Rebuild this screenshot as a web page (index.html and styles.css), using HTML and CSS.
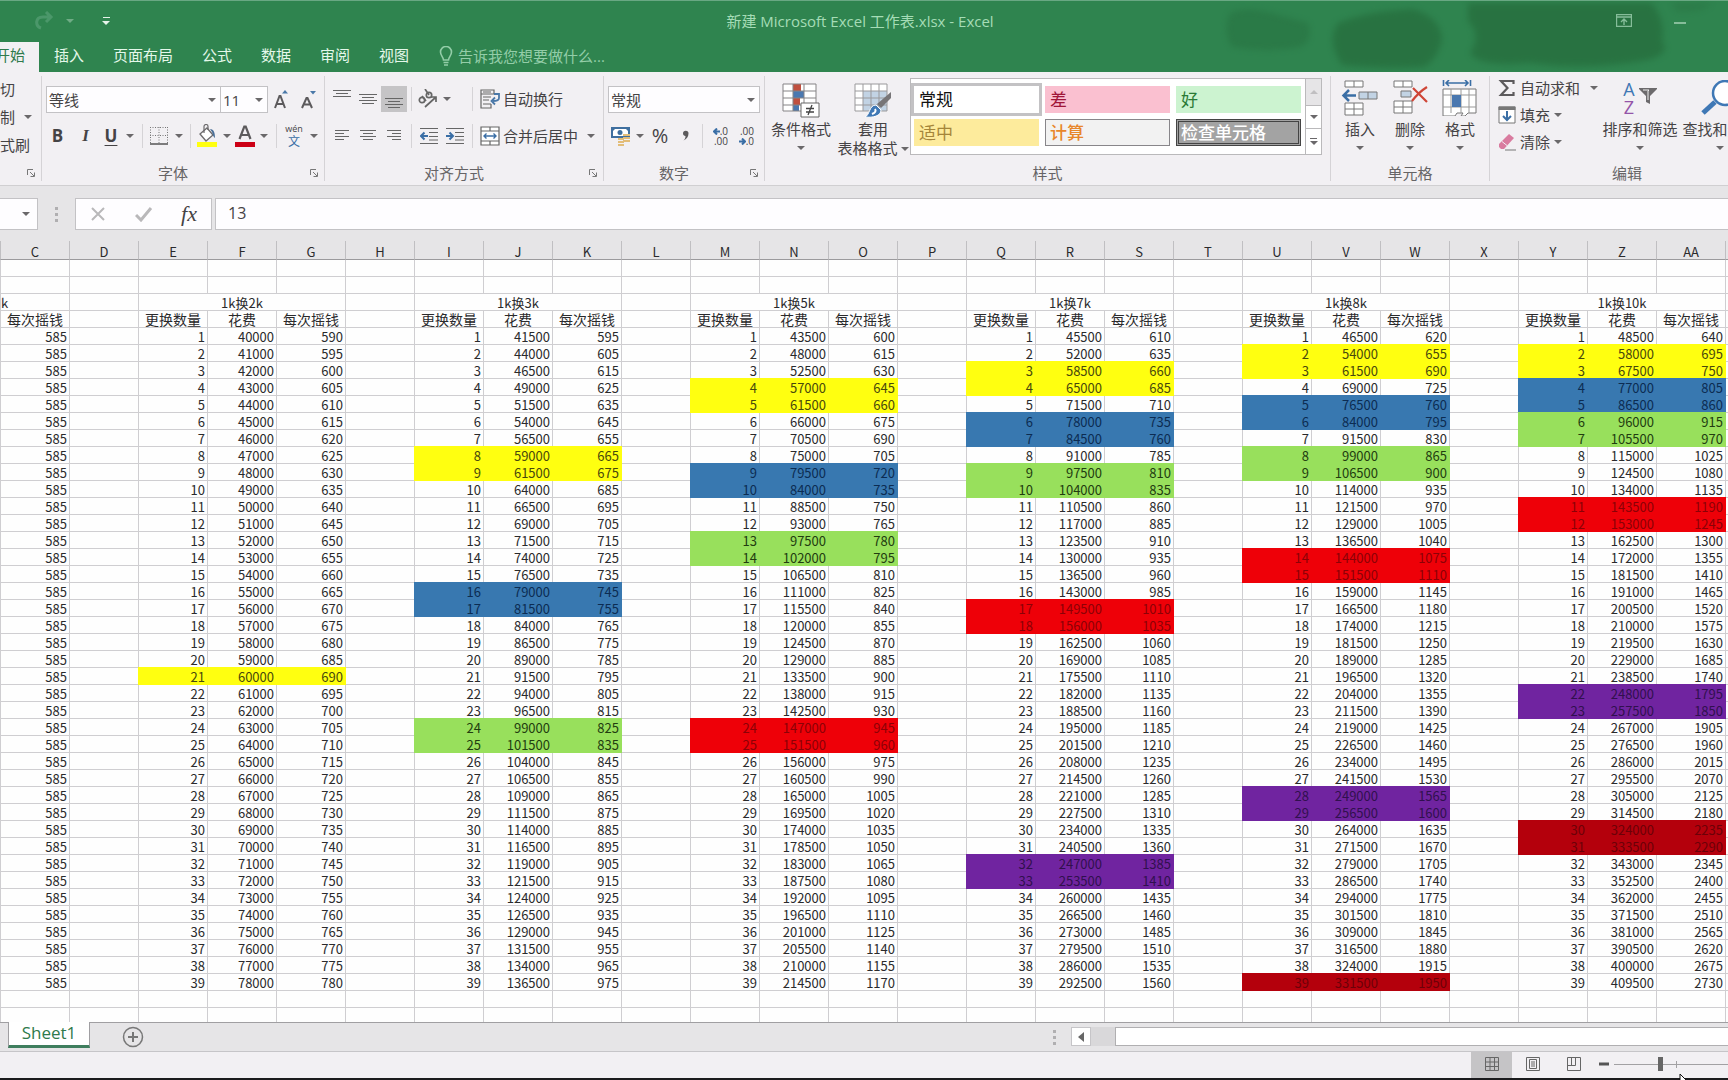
FILE: index.html
```html
<!DOCTYPE html>
<html lang="zh-CN">
<head>
<meta charset="utf-8">
<title>新建 Microsoft Excel 工作表.xlsx - Excel</title>
<link rel="stylesheet" href="styles.css">
</head>
<body>
<header class="top">
  <svg class="blots" viewBox="0 0 540 72" aria-hidden="true">
    <g fill="#27703f">
      <path opacity=".6" d="M42 12 Q60 4 90 14 L120 22 Q126 40 112 46 Q80 52 44 46 Q34 30 42 12Z"/>
      <path d="M150 22 Q180 10 225 8 Q252 16 254 38 Q250 58 236 66 Q190 68 154 64 Q138 40 150 22Z"/>
      <path d="M280 2 H464 Q478 20 474 40 Q484 52 460 59 Q400 70 340 62 Q290 66 282 52 Q294 34 280 20Z"/>
      <path opacity=".5" d="M484 2 H524 Q516 12 488 10Z"/>
    </g>
  </svg>
  <div class="titlebar">
    <div class="quick">
      <button class="redo" aria-label="恢复">
        <svg width="22" height="20" viewBox="0 0 22 20"><path d="M7 17C1 15 1 6 9 6H17M12 1l5 5-5 5" fill="none" stroke="#5fa57c" stroke-width="3"/></svg>
        <span class="arrow faint"></span>
      </button>
      <button class="more" aria-label="自定义快速访问工具栏"><i></i><span class="arrow"></span></button>
    </div>
    <h1>新建 Microsoft Excel 工作表.xlsx - Excel</h1>
    <div class="window">
      <button aria-label="功能区显示选项"><svg width="16" height="13" viewBox="0 0 16 13"><path d="M.5 .5h15v12H.5zM.5 3h15M8 11V5M5 8l3-3 3 3" fill="none" stroke="#86bd9a" stroke-width="1.4"/></svg></button>
      <button aria-label="最小化"><svg width="12" height="13" viewBox="0 0 12 13"><path d="M0 9h12" stroke="#86bd9a" stroke-width="2"/></svg></button>
    </div>
  </div>
  <nav class="tabs">
    <a class="active" href="#home">开始</a><a href="#insert">插入</a><a href="#layout">页面布局</a><a href="#formula">公式</a><a href="#data">数据</a><a href="#review">审阅</a><a href="#view">视图</a>
    <button class="tell"><svg width="14" height="20" viewBox="0 0 14 20"><path d="M4.5 14c0-3-3-4-3-8a5.500 5.500 0 0 1 11 0c0 4-3 5-3 8zM4.500 16.500h5M5 19h4" fill="none" stroke="#93cda8" stroke-width="1.600"/></svg>告诉我您想要做什么...</button>
  </nav>
</header>

<section class="ribbon">
  <div class="group clip">
    <div class="stack">
      <button>切</button>
      <button>制<span class="arrow"></span></button>
      <button>式刷</button>
    </div>
    <footer><span></span><button class="launch" aria-label="剪贴板"><svg width="8" height="8"><use href="#launch"/></svg></button></footer>
  </div>

  <div class="group font">
    <div class="row combos">
      <label class="combo"><select aria-label="字体"><option>等线</option></select></label>
      <label class="combo size"><select aria-label="字号"><option>11</option></select></label>
      <button aria-label="增大字号"><svg width="18" height="20" viewBox="0 0 18 20"><path d="M2 18L6.500 6h1L12 18M4 14h6" fill="none" stroke="#5c5a5c" stroke-width="2"/><path d="M9 3.500L12 0l3 3.500z" fill="#4a78a8"/></svg></button>
      <button aria-label="减小字号"><svg width="18" height="20" viewBox="0 0 18 20"><path d="M2 18L6.500 8h1L12 18M4 14.500h6" fill="none" stroke="#5c5a5c" stroke-width="2"/><path d="M10 1l3 3.500L16 1z" fill="#4a78a8"/></svg></button>
    </div>
    <div class="row tools">
      <button class="b">B</button><button class="i">I</button><button class="u">U</button><span class="arrow"></span><span class="sep"></span>
      <button aria-label="边框"><svg width="18" height="18" viewBox="0 0 18 18"><path d="M.5 0v17M17.500 0v17M9 0v17M0 .5h18M0 8.500h18" fill="none" stroke="#777" stroke-dasharray="1 1.500"/><path d="M0 17h18" stroke="#555" stroke-width="1.500"/></svg></button><span class="arrow"></span><span class="sep"></span>
      <button aria-label="填充颜色"><svg width="20" height="24" viewBox="0 0 20 24"><path d="M3 10l7-6 6 7-7 6z" fill="#fff" stroke="#6c6a6c" stroke-width="1.300"/><path d="M7 9V2.500a2 2 0 0 1 4 0V6" fill="none" stroke="#6c6a6c" stroke-width="1.200"/><path d="M13 5c4 0 5 4 5 9-2-1-2-4-3-6z" fill="#4a6f98"/><path d="M0 18h20v5H0z" fill="#ffff10"/></svg></button><span class="arrow"></span>
      <button aria-label="字体颜色"><svg width="20" height="24" viewBox="0 0 20 24"><path d="M4.500 15L9.300 2.500h1.400L15.500 15M6.500 11h7" fill="none" stroke="#5c5a5c" stroke-width="2.200"/><path d="M0 18h20v5H0z" fill="#cc0015"/></svg></button><span class="arrow"></span><span class="sep"></span>
      <button class="wen"><small>wén</small><b>文</b></button><span class="arrow"></span>
    </div>
    <footer><span>字体</span><button class="launch" aria-label="字体设置"><svg width="8" height="8"><use href="#launch"/></svg></button></footer>
  </div>

  <div class="group align">
    <div class="row one">
      <button aria-label="顶端对齐"><svg width="18" height="20"><path d="M0 1.500h18M3 4.500h12M0 7.500h18" stroke="#666"/></svg></button>
      <button aria-label="垂直居中"><svg width="18" height="20"><path d="M0 5.500h18M3 8.500h12M0 11.500h18M3 14.500h12" stroke="#666"/></svg></button>
      <button class="on" aria-label="底端对齐"><svg width="18" height="20"><path d="M0 9.500h18M3 12.500h12M0 15.500h18M3 18.500h12" stroke="#666"/></svg></button>
      <span class="sep"></span>
      <button aria-label="方向"><svg width="22" height="20" viewBox="0 0 22 20"><g fill="none" stroke="#666" stroke-width="1.700"><circle cx="5" cy="11" r="2.700"/><path d="M5 7l4 5"/><path d="M8 0l4 6"/><circle cx="12" cy="6" r="2.700"/><path d="M8 18L19 8M14 8h5v5"/></g></svg></button><span class="arrow"></span><span></span><span class="sep"></span>
      <button class="txt"><svg width="20" height="20" viewBox="0 0 20 20"><path d="M1 1h13v4H1zM1 5v14h10v-4M3 8h8M3 11h6M3 15h8M3 3h8" fill="none" stroke="#666" stroke-width="1.200"/><path d="M14 5h5v4q0 3-6 3M15 8.500l-3.500 3.500L15 15.500" fill="none" stroke="#4a78a8" stroke-width="1.800"/></svg>自动换行</button>
    </div>
    <div class="row two">
      <button aria-label="左对齐"><svg width="16" height="14"><path d="M1 1.500h14M1 4.500h9M1 7.500h14M1 10.500h9" stroke="#666"/></svg></button>
      <button aria-label="居中"><svg width="16" height="14"><path d="M0 1.500h16M3 4.500h10M0 7.500h16M3 10.500h10" stroke="#666"/></svg></button>
      <button aria-label="右对齐"><svg width="16" height="14"><path d="M1 1.500h14M6 4.500h9M1 7.500h14M6 10.500h9" stroke="#666"/></svg></button>
      <span class="sep"></span>
      <button aria-label="减少缩进量"><svg width="18" height="16"><path d="M0 .5h18M9 4.500h9M9 8.500h9M9 12h9M0 15.500h18" stroke="#666"/><path d="M1 8h7M4.500 4.500L1 8l3.500 3.500" fill="none" stroke="#3a6ea5" stroke-width="2"/></svg></button>
      <button aria-label="增加缩进量"><svg width="18" height="16"><path d="M0 .5h18M9 4.500h9M9 8.500h9M9 12h9M0 15.500h18" stroke="#666"/><path d="M0 8h7M3.500 4.500L7 8l-3.500 3.500" fill="none" stroke="#3a6ea5" stroke-width="2"/></svg></button>
      <span class="sep"></span>
      <button class="txt"><svg width="20" height="20" viewBox="0 0 20 20"><path d="M1 1h18v18H1zM1 5h18M1 15h18M10 1v4M10 15v4" fill="#fff" stroke="#666" stroke-width="1.200"/><path d="M4 10h12M6.500 7.500L4 10l2.500 2.500M13.500 7.500L16 10l-2.500 2.500" fill="none" stroke="#3a6ea5" stroke-width="1.400"/></svg>合并后居中</button><span class="arrow"></span>
    </div>
    <footer><span>对齐方式</span><button class="launch" aria-label="对齐设置"><svg width="8" height="8"><use href="#launch"/></svg></button></footer>
  </div>

  <div class="group number">
    <div class="row"><label class="combo"><select aria-label="数字格式"><option>常规</option></select></label></div>
    <div class="row tools">
      <button aria-label="会计数字格式"><svg width="20" height="20" viewBox="0 0 20 20"><path d="M1 2h17v9H1z" fill="#fff" stroke="#3f6f9f" stroke-width="2"/><circle cx="9" cy="6.500" r="2.500" fill="#3f6f9f"/><path d="M1 2h4L1 6zM18 2h-4l4 4z" fill="#3f6f9f"/><path d="M12 9h7M12 12h7M12 15h7M7 13h6M7 16h6M7 19h6" stroke="#e3bd78" stroke-width="2"/></svg></button><span class="arrow"></span>
      <button class="pct">%</button>
      <button aria-label="千位分隔样式"><svg width="8" height="12"><path d="M1 3.500a2.500 2.500 0 0 1 5.500 0C6.500 7 4.500 9 1.500 10.500 3 9 3.500 8 3.500 6 2 6 1 5 1 3.500z" fill="#5c5a5c"/></svg></button>
      <span class="sep"></span>
      <button class="dec"><span><svg width="7" height="7"><use href="#left"/></svg>.0</span><span>.00</span></button>
      <button class="dec"><span>.00</span><span><svg width="7" height="7"><use href="#right"/></svg>.0</span></button>
    </div>
    <footer><span>数字</span><button class="launch" aria-label="数字设置"><svg width="8" height="8"><use href="#launch"/></svg></button></footer>
  </div>

  <div class="group styles">
    <div class="bigs">
      <button class="big"><svg width="38" height="36" viewBox="0 0 38 36"><path d="M1 1h33v27H1z" fill="#fff"/><path d="M11 1h8v7h-8z" fill="#c0503f"/><path d="M11 8h11v7H11z" fill="#4a78b0"/><path d="M11 15h7v7h-7z" fill="#c0503f"/><path d="M11 22h6v6h-6z" fill="#4a78b0"/><path d="M1 1h33v27H1zM11 1v27M22 1v27M1 8h33M1 15h33M1 22h33" fill="none" stroke="#858385"/><path d="M19 20h18v14H19z" fill="#fff" stroke="#666"/><path d="M24 25.500h8M24 29h8M30 22l-4 10" stroke="#444" stroke-width="1.300"/></svg><span>条件格式</span><span class="arrow"></span></button>
      <button class="big"><svg width="38" height="36" viewBox="0 0 38 36"><path d="M1 1h32v27H1z" fill="#fff"/><path d="M9 8h24v20H9z" fill="#c2d3e4"/><path d="M1 1h32v27H1zM9 1v27M17 1v27M25 1v27M1 8h32M1 15h32M1 22h32" fill="none" stroke="#9a999b"/><path d="M37 9v6l-10 10-4-4z" fill="#777577"/><path d="M22 22l5 5c0 6-8 8-16 7 5-2 4-12 11-12z" fill="#3f78b5" stroke="#fff"/><path d="M21 26q2 3-3 5" fill="none" stroke="#fff" stroke-width="2"/></svg><span>套用</span><span class="line">表格格式<i class="arrow"></i></span></button>
    </div>
    <div class="gallery">
      <div class="swatches">
        <button class="normal">常规</button><button class="bad">差</button><button class="good">好</button>
        <button class="neutral">适中</button><button class="calc">计算</button><button class="check">检查单元格</button>
      </div>
      <div class="scroll"><button class="off" aria-label="上"><span class="arrow up"></span></button><button aria-label="下"><span class="arrow"></span></button><button class="all" aria-label="更多"><i></i><span class="arrow"></span></button></div>
    </div>
    <footer><span>样式</span></footer>
  </div>

  <div class="group cells">
    <div class="bigs">
      <button class="big"><svg width="38" height="36" viewBox="0 0 38 36"><path d="M4 1h18v6H4zM13 1v6M4 23h18v12H4zM13 23v12M4 29h18" fill="#fff" stroke="#777"/><path d="M18 12h18v7H18zM27 12v7" fill="#c2d3e4" stroke="#777"/><path d="M3 15.500h12M8 10l-5.500 5.500L8 21" fill="none" stroke="#3a6ea5" stroke-width="2.500"/></svg><span>插入</span><span class="arrow"></span></button>
      <button class="big"><svg width="38" height="36" viewBox="0 0 38 36"><path d="M3 1h18v6H3zM12 1v6M3 21h18v12H3zM12 21v12M3 27h18" fill="#fff" stroke="#777"/><path d="M10 11h10v6H10z" fill="#c2d3e4" stroke="#777"/><path d="M22 8q6 6 14 14M36 7q-8 5-15 14" fill="none" stroke="#cf4536" stroke-width="2.200"/></svg><span>删除</span><span class="arrow"></span></button>
      <button class="big"><svg width="38" height="36" viewBox="0 0 38 36"><path d="M2 9h33v24H27l-3 3H20l2-3h-6l-2 3H2z" fill="#fff" stroke="#777"/><path d="M10 9v24M20 9v24M28 9v24M2 15h33M2 27h33" stroke="#999"/><path d="M11 15h9v12h-9z" fill="#4a78b0"/><path d="M2.500 0v6M29.500 0v6M5 3h22M8 0L5 3l3 3M24 0l3 3-3 3" fill="none" stroke="#3a6ea5" stroke-width="1.600"/></svg><span>格式</span><span class="arrow"></span></button>
    </div>
    <footer><span>单元格</span></footer>
  </div>

  <div class="group edit">
    <div class="stack">
      <button><svg width="18" height="18" viewBox="0 0 18 18"><path d="M15.500 5V2H3l6.500 7L3 16h12.500v-3" fill="none" stroke="#5c5a5c" stroke-width="2.200"/></svg>自动求和<span class="arrow far"></span></button>
      <button><svg width="18" height="18" viewBox="0 0 18 18"><path d="M1 1h16v16H1z" fill="#fff" stroke="#777"/><path d="M.5 .5h17V4H.5z" fill="#777"/><path d="M9 5v9M5 10l4 4 4-4" fill="none" stroke="#3a6ea5" stroke-width="2"/></svg>填充<span class="arrow"></span></button>
      <button><svg width="18" height="18" viewBox="0 0 18 18"><path d="M1 11L11 1l5 4L6 16H3L1 14z" fill="#d97b9f"/><path d="M4 8.500l5 4" stroke="#f2eff2"/><path d="M7 17h11" stroke="#777"/></svg>清除<span class="arrow"></span></button>
    </div>
    <div class="bigs">
      <button class="big"><span class="az"><span><b>A</b><b>Z</b></span><svg width="18" height="20" viewBox="0 0 18 20"><path d="M0 2h18v1L11 10v8l-4-2v-6L0 3z" fill="#6c6a6c"/><path d="M4 4h6l-1 1v9" fill="none" stroke="#eee"/></svg></span><span>排序和筛选</span><span class="arrow"></span></button>
      <button class="big"><svg width="38" height="36" viewBox="0 0 38 36"><circle cx="24" cy="13" r="12" fill="#fff" stroke="#3f78b5" stroke-width="2.500"/><path d="M14 22L2 33" stroke="#3f78b5" stroke-width="5"/></svg><span>查找和选择</span><span class="arrow"></span></button>
    </div>
    <footer><span>编辑</span></footer>
  </div>
</section>

<section class="formula">
  <button class="namebox" aria-label="名称框"><span class="arrow"></span></button>
  <span class="dots"><i></i><i></i><i></i></span>
  <div class="fxbox">
    <button aria-label="取消"><svg width="16" height="16"><path d="M2 2l12 12M14 2L2 14" stroke="#b9b8ba" stroke-width="2"/></svg></button>
    <button aria-label="输入"><svg width="18" height="16"><path d="M1 9l5 5L16 2" fill="none" stroke="#b9b8ba" stroke-width="3"/></svg></button>
    <button class="fx">fx</button>
  </div>
  <input class="value" aria-label="编辑栏" value="13">
</section>

<main class="sheet"><table><colgroup id="cols"></colgroup><thead id="head"></thead><tbody id="grid"></tbody></table></main>

<section class="sheetbar">
  <button class="sheettab">Sheet1</button>
  <button class="add" aria-label="新工作表"><svg width="22" height="22"><circle cx="11" cy="11" r="9.500" fill="none" stroke="#777" stroke-width="1.500"/><path d="M6 11h10M11 6v10" stroke="#777" stroke-width="2"/></svg></button>
  <span class="dots"><i></i><i></i><i></i></span>
  <div class="hscroll"><button aria-label="向左"><svg width="6" height="10"><path d="M6 0v10L0 5z" fill="#666"/></svg></button><span class="thumb"></span></div>
</section>

<footer class="status">
  <button class="on" aria-label="普通"><svg width="14" height="14"><path d="M.5.5h13v13H.5zM5 0v14M9.500 0v14M0 5h14M0 9.500h14" fill="none" stroke="#666"/></svg></button>
  <button aria-label="页面布局"><svg width="14" height="14"><path d="M.5.5h13v13H.5zM3.500 2.500h7v9h-7zM5 5h4M5 7h4M5 9h4" fill="none" stroke="#666"/></svg></button>
  <button aria-label="分页预览"><svg width="14" height="14"><path d="M.5.5h13v13H.5zM.5 8.500h8v-8M4.500 0v8" fill="none" stroke="#666"/></svg></button>
  <button class="minus" aria-label="缩小"><svg width="10" height="4"><path d="M0 2h10" stroke="#555" stroke-width="3"/></svg></button>
  <div class="zoom"><input type="range" min="0" max="100" value="37" aria-label="缩放"><i></i></div>
</footer>
<svg class="pointer" width="12" height="18" viewBox="0 0 12 18" aria-hidden="true"><path d="M1 0v16l4-4 3 6 2-1-3-6h5z" fill="#fff" stroke="#111"/></svg>

<svg class="defs" aria-hidden="true">
  <symbol id="launch" viewBox="0 0 8 8"><path d="M.5 6V.5H6M3 3l4 4M7.500 3.500v4h-4" fill="none" stroke="#777"/></symbol>
  <symbol id="left" viewBox="0 0 7 7"><path d="M7 3.500H1M4 .5l-3 3 3 3" fill="none" stroke="#3a6ea5" stroke-width="2"/></symbol>
  <symbol id="right" viewBox="0 0 7 7"><path d="M0 3.500h6M3 .5l3 3-3 3" fill="none" stroke="#3a6ea5" stroke-width="2"/></symbol>
</svg>
<script src="script.js"></script>
</body>
</html>
```
FILE: styles.css
```css
* { box-sizing: border-box; }
body {
  margin: 0; height: 100vh; min-width: 0; overflow: hidden;
  display: flex; flex-direction: column;
  font: 15px/20px "Open Sans", "Noto Sans CJK SC", sans-serif;
  color: #454345; background: #e6e5e7;
  border-bottom: 2px solid #1b1b1d;
}
button, select, input { font: inherit; color: inherit; border: 0; padding: 0; margin: 0; background: none; border-radius: 0; }
button { display: flex; align-items: center; justify-content: center; white-space: nowrap; }
svg { display: block; flex: none; }
.defs { display: none; }
.arrow { width: 0; height: 0; border: 4px solid transparent; border-top-color: #6a686a; border-bottom: 0; justify-self: center; flex: none; }
.arrow.up { border-top: 0; border-bottom: 4px solid #c0bfc1; }

/* Title and tabs */
.top { position: relative; flex: none; background: #2f844f; border-top: 1px solid #69a883; overflow: hidden; }
.blots { position: absolute; right: 0; top: 0; width: 540px; height: 72px; filter: blur(3px); opacity: .85; }
.titlebar, .tabs { position: relative; display: flex; align-items: center; }
.titlebar { height: 41px; padding-bottom: 2px; }
.quick, .window { flex: 1; display: flex; align-items: center; }
.quick { gap: 28px; padding-left: 34px; }
.redo { gap: 10px; opacity: .6; }
.more { flex-direction: column; gap: 3px; }
.more i { width: 7px; height: 1px; background: #e6f3ea; }
.more .arrow { border-top-color: #e6f3ea; }
.faint { border-top-color: #9cc8ab; }
.titlebar h1 { margin: 0; font-size: 15px; font-weight: 400; color: #a5dcb6; }
.window { justify-content: flex-end; gap: 42px; padding-right: 42px; }
.tabs { height: 30px; }
.tabs a { color: #e4f8ea; text-decoration: none; padding: 0 14px 0 15px; line-height: 27px; height: 30px; flex: none; white-space: nowrap; }
.tabs a.active { background: #f2f0f3; color: #2f7a4c; width: 39px; padding: 0 14px 0 0; display: flex; justify-content: flex-end; }
.tell { gap: 5px; margin-left: 16px; padding-bottom: 2px; color: #93cda8; }

/* Ribbon */
.ribbon { display: flex; flex: none; height: 114px; padding: 4px 0; background: #f2f0f3; border-bottom: 1px solid #d0cfd1; overflow: hidden; }
.group { flex: none; display: grid; grid-template-rows: 1fr 16px; border-right: 1px solid #d5d3d6; }
.group footer { grid-column: 1 / -1; display: flex; color: #666466; line-height: 16px; }
.group footer span { flex: 1; text-align: center; }
.launch { width: 20px; }
.clip { width: 42px; }
.font { width: 283px; }
.align { width: 279px; }
.number { width: 161px; }
.styles { width: 566px; grid-template-columns: auto 1fr; }
.cells { width: 159px; }
.edit { width: 274px; grid-template-columns: 107px 1fr; border-right: 0; }
.font, .align, .number { grid-template-rows: 26px 26px 1fr; row-gap: 11px; padding-top: 10px; }
.font footer, .align footer, .number footer { align-self: end; height: 16px; }
.row { display: grid; align-items: center; }
.row button { height: 26px; }
.sep { width: 1px; height: 24px; background: #d5d3d6; justify-self: center; }
.on { background: #c5c4c6; }
.stack { display: flex; flex-direction: column; gap: 7px; align-items: flex-start; }
.stack button { height: 20px; }
.clip .stack { padding-top: 3px; gap: 8px; }
.clip .stack .arrow { margin-left: 9px; }

.combo { position: relative; display: block; height: 27px; background: #fefdff; border: 1px solid #c3c2c5; }
.combo select { appearance: none; width: 100%; height: 25px; padding-left: 2px; }
.combo::after { content: ""; position: absolute; right: 4px; top: 11px; border: 4px solid transparent; border-top-color: #6a686a; border-bottom: 0; }
.size { border-left: 0; }
.combos { grid-template-columns: 175px 47px 28px 26px; padding-left: 4px; }
.font .tools { grid-template-columns: 27px 29px 22px 16px 8px 26px 14px 8px 26px 14px 22px 16px 8px 28px 12px; padding-left: 2px; }
.b, .i, .u { font-size: 17px; font-weight: 700; }
.i { font-family: "Liberation Serif", serif; font-style: italic; }
.u { text-decoration: underline; text-underline-offset: 3px; }
.wen { flex-direction: column; }
.wen small { font-size: 9px; line-height: 12px; }
.wen b { font-size: 12px; line-height: 14px; font-weight: 400; color: #3a6ea5; }
.one { grid-template-columns: 26px 26px 26px 8px 26px 12px 15px 8px 107px; padding-left: 4px; }
.two { grid-template-columns: 26px 26px 26px 8px 27px 26px 8px 107px 16px; padding-left: 4px; }
.txt { gap: 3px; justify-content: flex-start; padding-left: 4px; }
.number .row { padding-left: 4px; }
.number .combo { width: 152px; }
.number .tools { grid-template-columns: 26px 12px 28px 24px 8px 28px 26px; }
.pct { font-size: 20px; }
.dec { flex-direction: column; align-items: flex-end; font-size: 10px; line-height: 10px; padding-right: 6px; }
.dec span { display: flex; align-items: center; }

.bigs { display: flex; }
.big { width: 72px; flex: none; flex-direction: column; justify-content: flex-start; line-height: 19px; padding-top: 7px; }
.big svg { margin-bottom: 1px; }
.big > .arrow { margin-top: 7px; }
.line { display: flex; align-items: center; gap: 3px; }
.gallery { display: grid; grid-template-columns: 1fr 16px; width: 412px; height: 77px; margin: 2px 0 0 1px; background: #fff; border: 1px solid #bab9bb; }
.swatches { display: grid; grid-template-columns: repeat(3, 125px); grid-auto-rows: 27px; gap: 6px; padding: 7px 0 0 3px; }
.swatches button { justify-content: flex-start; padding-left: 5px; font-size: 17px; color: #111; }
.normal { outline: 3px solid #c3c2c4; background: #fff; }
.swatches .bad { background: #fac0d0; color: #a01538; }
.swatches .good { background: #ccf3d0; color: #2a7a35; }
.swatches .neutral { background: #fdeb9c; color: #a5853a; }
.swatches .calc { background: #f2f2f2; color: #e8862a; border: 1px solid #88868a; font-weight: 500; padding-left: 4px; }
.swatches .check { background: #a3a3a3; color: #fff; border: 3px double #444; padding-left: 2px; font-weight: 500; }
.scroll { display: grid; grid-template-rows: 26px 23px 1fr; border-left: 1px solid #bab9bb; }
.scroll button + button { border-top: 1px solid #bab9bb; }
.scroll .off { background: #e6e5e7; }
.all { flex-direction: column; gap: 2px; }
.all i { width: 7px; height: 1px; background: #6a686a; }
.cells .bigs { padding-left: 4px; }
.cells .big { width: 50px; padding-top: 4px; }
.cells .big svg, .edit .big svg { margin-bottom: 4px; }
.edit .stack { padding: 2px 0 0 8px; }
.edit .stack button { gap: 4px; }
.edit .far { margin-left: 6px; }
.edit .big { width: 80px; padding-top: 4px; }
.edit .bigs { padding-left: 3px; }
.az { display: flex; align-items: center; gap: 4px; height: 36px; margin-bottom: 4px; }
.az span { display: flex; flex-direction: column; }
.az b { font: 18px/18px "Open Sans", sans-serif; color: #3f78b5; }
.az b + b { color: #9455a8; }

/* Formula bar */
.formula { display: flex; flex: none; height: 32px; margin: 12px 0 11px; }
.namebox { width: 38px; background: #fefdff; border: 1px solid #c3c2c5; border-left: 0; justify-content: flex-end; padding-right: 7px; }
.dots { display: flex; flex-direction: column; justify-content: center; align-items: center; gap: 3px; width: 37px; }
.dots i { width: 3px; height: 3px; background: #b0afb1; }
.fxbox { display: grid; grid-template-columns: 44px 47px 44px; width: 137px; background: #fefdff; border: 1px solid #c3c2c5; }
.fx { font: italic 22px "Liberation Serif", serif; }
.value { flex: 1; min-width: 0; margin-left: 3px; padding: 0 0 2px 12px; font-size: 16px; background: #fefdff; border: 1px solid #c3c2c5; border-right: 0; }

/* Grid */
.sheet { flex: 1; min-height: 0; overflow: hidden; background: #fefefe; }
table { border-collapse: separate; border-spacing: 0; table-layout: fixed; width: 1795px; }
th, td { height: 17px; padding: 2px 2px 0 0; white-space: nowrap; font: 13px/14px "Noto Sans CJK SC", sans-serif; color: #2a2a2c; border: solid #cfced1; border-width: 0 1px 1px 0; text-align: right; }
th { height: 19px; padding: 4px 0 0; text-align: center; background: #e6e5e7; border-color: #9b9a9d; border-right-color: #c0bfc2; }
td.name { padding: 0; line-height: 16px; text-align: center; font-size: 14px; }
td.title { padding-right: 0; text-align: center; }
td.cut { padding-right: 0; text-align: left; }
td.fill { --c: #fff; background: var(--c); border-color: var(--c); box-shadow: 0 -1px var(--c), -1px 0 var(--c), -1px -1px var(--c); }
td.yellow { --c: #ffff10; color: #48480c; }
td.blue { --c: #3878b0; color: #0c2c52; }
td.green { --c: #98e05c; color: #223c10; }
td.red { --c: #ee0008; color: #8c0006; }
td.purple { --c: #7024a0; color: #30104e; }
td.dark { --c: #b4000c; color: #6c0008; }

/* Sheet tabs and status bar */
.sheetbar { display: flex; flex: none; height: 30px; border-top: 1px solid #a09fa2; border-bottom: 1px solid #c6c5c8; }
.sheettab { width: 82px; height: 26px; margin: -1px 0 0 8px; padding-bottom: 2px; background: #fff; color: #2f7a4c; font-size: 17px; border: 1px solid #a09fa2; border-top: 0; border-bottom: 3px solid #3f7e5e; }
.add { margin-left: 32px; }
.sheetbar .dots { margin-left: auto; width: 34px; }
.hscroll { display: flex; width: 657px; height: 19px; margin-top: 4px; background: #d9d8da; }
.hscroll button { width: 20px; background: #fff; border: 1px solid #c6c5c8; }
.thumb { flex: 1; margin-left: 24px; background: #fff; border: 1px solid #b0afb1; border-right: 0; }
.status { display: flex; flex: none; height: 26px; justify-content: flex-end; background: #f2f0f3; }
.status button { width: 41px; padding-bottom: 2px; }
.status .minus { width: 20px; }
.zoom { position: relative; width: 114px; overflow: hidden; flex: none; }
.zoom input { appearance: none; display: block; width: 124px; height: 24px; background: linear-gradient(#a2a1a3, #a2a1a3) 0 12px / 100% 1px no-repeat; }
.zoom input::-webkit-slider-thumb { appearance: none; width: 5px; height: 14px; background: #666; }
.zoom i { position: absolute; left: 62px; top: 9px; width: 1px; height: 7px; background: #a2a1a3; }
.pointer { position: absolute; left: 1679px; top: 1074px; clip-path: inset(0 0 12px 0); }
```
FILE: script.js
```javascript
// Every block starts at 39000 / 585 and grows by a fixed step per swap.
const blocks = [
  { name: "1k换2k", cost: 1000, gain: 5, fills: { yellow: [21] } },
  { name: "1k换3k", cost: 2500, gain: 10, fills: { yellow: [8, 9], blue: [16, 17], green: [24, 25] } },
  { name: "1k换5k", cost: 4500, gain: 15, fills: { yellow: [4, 5], blue: [9, 10], green: [13, 14], red: [24, 25] } },
  { name: "1k换7k", cost: 6500, gain: 25, fills: { yellow: [3, 4], blue: [6, 7], green: [9, 10], red: [17, 18], purple: [32, 33] } },
  { name: "1k换8k", cost: 7500, gain: 35, fills: { yellow: [2, 3], blue: [5, 6], green: [8, 9], red: [14, 15], purple: [28, 29], dark: [39] } },
  { name: "1k换10k", cost: 9500, gain: 55, fills: { yellow: [2, 3], blue: [4, 5], green: [6, 7], red: [11, 12], purple: [22, 23], dark: [30, 31] } }
];
const letters = [..."CDEFGHIJKLMNOPQRSTUVWXYZ", "AA", ""];
const td = (text = "", cls = "", span = 1) => `<td class="${cls}" colspan="${span}">${text}</td>`;
const row = cells => `<tr>${td()}${cells}</tr>`;
const blank = row(letters.map(() => td()).join(""));

document.getElementById("cols").innerHTML = '<col style="width:1px">' + letters.map(() => '<col style="width:69px">').join("");
document.getElementById("head").innerHTML = `<tr><th></th>${letters.map(l => `<th>${l}</th>`).join("")}</tr>`;

let html = blank + blank;
html += row(td("k", "cut") + blocks.map(b => td() + td(b.name, "title", 3)).join("") + td());
html += row(td("每次摇钱", "name") + blocks.map(b =>
  td() + td("更换数量", "name") + td("花费", "name") + td("每次摇钱", "name")).join("") + td());
for (let n = 1; n <= 39; n++) {
  html += row(td(585) + blocks.map(b => {
    const color = Object.keys(b.fills).find(k => b.fills[k].includes(n));
    const cls = color ? `fill ${color}` : "";
    return td() + td(n, cls) + td(39000 + b.cost * n, cls) + td(585 + b.gain * n, cls);
  }).join("") + td());
}
document.getElementById("grid").innerHTML = html + blank + blank;
```
